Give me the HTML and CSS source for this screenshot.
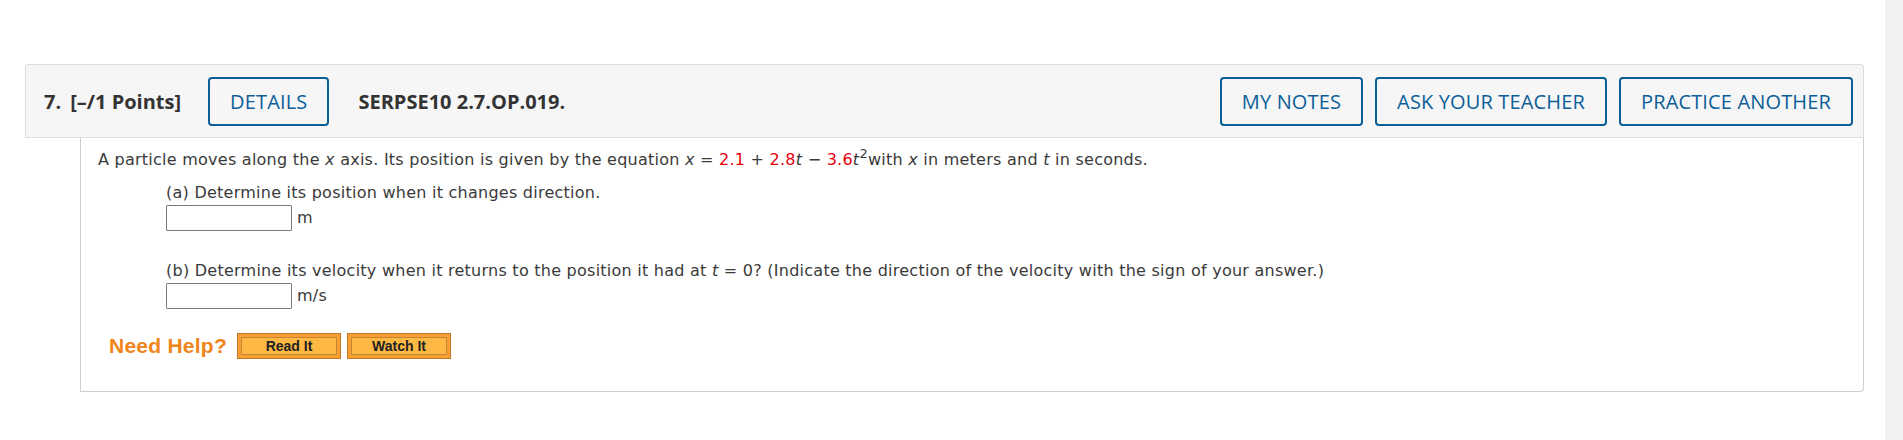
FILE: index.html
```html
<!DOCTYPE html>
<html lang="en">
<head>
<meta charset="utf-8">
<title>Question 7</title>
<link rel="stylesheet" href="styles.css">
</head>
<body>
<div class="page">
  <main class="main">
    <section class="question">
      <header class="q-header">
        <div class="q-title"><span class="q-num">7.</span><span class="q-points">[–/1 Points]</span></div>
        <button class="btn btn-details">DETAILS</button>
        <div class="q-code">SERPSE10 2.7.OP.019.</div>
        <div class="q-actions">
          <button class="btn">MY NOTES</button>
          <button class="btn">ASK YOUR TEACHER</button>
          <button class="btn">PRACTICE ANOTHER</button>
        </div>
      </header>
      <div class="q-body">
        <p class="intro">A particle moves along the <i>x</i> axis. Its position is given by the equation <i>x</i> = <span class="red">2.1</span> + <span class="red">2.8</span><i>t</i> − <span class="red">3.6</span><i>t</i><sup>2</sup>with <i>x</i> in meters and <i>t</i> in seconds.</p>
        <div class="part">
          <p class="label">(a) Determine its position when it changes direction.</p>
          <div class="answer"><input class="field" type="text"><span class="unit">m</span></div>
        </div>
        <div class="part part-b">
          <p class="label">(b) Determine its velocity when it returns to the position it had at <i>t</i> = 0? (Indicate the direction of the velocity with the sign of your answer.)</p>
          <div class="answer"><input class="field" type="text"><span class="unit">m/s</span></div>
        </div>
        <div class="help">
          <span class="help-title">Need Help?</span>
          <button class="help-btn"><span>Read It</span></button>
          <button class="help-btn"><span>Watch It</span></button>
        </div>
      </div>
    </section>
  </main>
  <div class="scrollbar"></div>
</div>
</body>
</html>
```

FILE: styles.css
```css
html, body {
  margin: 0;
  padding: 0;
  background: #fff;
}

.page {
  display: flex;
  width: 1903px;
  height: 440px;
  overflow: hidden;
}

.main {
  flex: 1;
  padding: 64px 21px 0 25px;
}

.scrollbar {
  width: 18px;
  background: #f1f1f1;
}

.q-header {
  display: flex;
  align-items: center;
  height: 72px;
  padding: 0 10px 0 18px;
  background: #f6f6f6;
  border: 1px solid #dcdcdc;
  border-radius: 3px 3px 0 0;
  font-family: "Open Sans", sans-serif;
  color: #333;
}

.q-title {
  font-size: 20px;
  font-weight: 700;
  display: flex;
  gap: 9px;
}

.btn {
  font-family: "Open Sans", sans-serif;
  font-size: 20px;
  font-weight: 500;
  letter-spacing: 0.15px;
  color: #0b5e98;
  background: transparent;
  border: 2px solid #0b5e98;
  border-radius: 4px;
  height: 49px;
  padding: 0 20px;
  cursor: pointer;
}

.btn-details {
  margin-left: 27px;
}

.q-code {
  margin-left: 29px;
  font-size: 20px;
  font-weight: 700;
}

.q-actions {
  margin-left: auto;
  display: flex;
  gap: 12px;
}

.q-body {
  margin-left: 55px;
  border: 1px solid #cfcfcf;
  border-top: none;
  border-radius: 0 0 4px 0;
  padding: 11px 17px 32px;
  font-family: "DejaVu Sans", Verdana, sans-serif;
  font-size: 16px;
  letter-spacing: 0.25px;
  line-height: 22px;
  color: #3a3a3a;
}

.q-body p {
  margin: 0;
}

.red {
  color: #e8000b;
}

sup {
  font-size: 13px;
  line-height: 0;
  vertical-align: 7px;
}

.part {
  margin: 11px 0 0 68px;
}

.part-b {
  margin-top: 29px;
}

.answer {
  display: flex;
  align-items: center;
  gap: 5px;
  margin-top: 1px;
}

.field {
  width: 126px;
  height: 26px;
  box-sizing: border-box;
  border: 1px solid #7a7a7a;
  border-radius: 1px;
  margin: 0;
  padding: 0;
}

.help {
  display: flex;
  align-items: center;
  gap: 6px;
  margin: 24px 0 0 11px;
}

.help-title {
  font-family: "Liberation Sans", Arial, sans-serif;
  font-weight: 700;
  font-size: 21px;
  color: #f08519;
  margin-right: 4px;
}

.help-btn {
  width: 104px;
  height: 26px;
  padding: 3px;
  box-sizing: border-box;
  background: #f7a031;
  border: 1px solid #c47628;
  cursor: pointer;
  display: flex;
}

.help-btn span {
  flex: 1;
  display: flex;
  align-items: center;
  justify-content: center;
  background: #fdb943;
  border: 1px solid #c48436;
  font-family: "Liberation Sans", Arial, sans-serif;
  font-weight: 700;
  font-size: 14px;
  color: #222;
}
```
